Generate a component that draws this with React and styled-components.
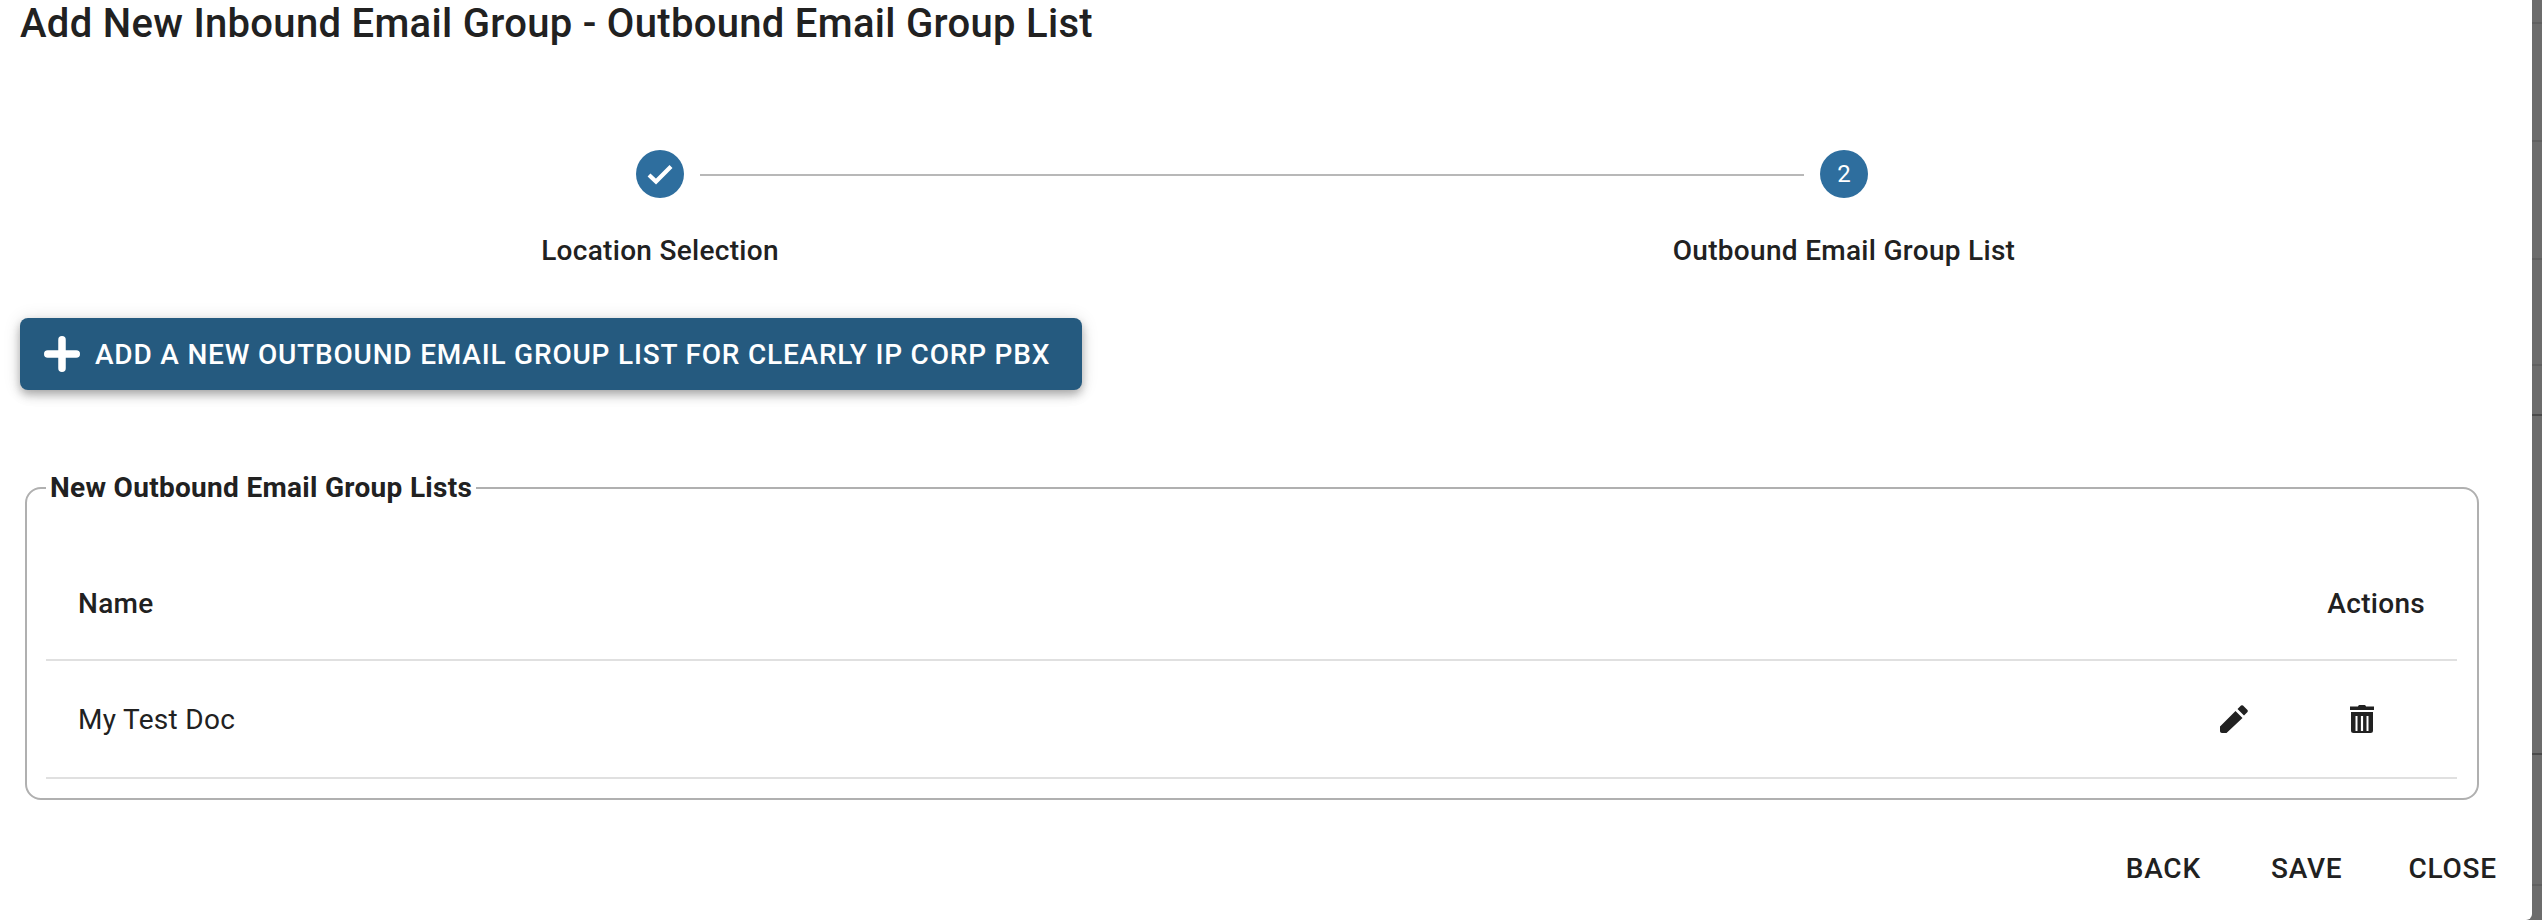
import React from "react";
import styled, { createGlobalStyle } from "styled-components";

const GlobalStyle = createGlobalStyle`
  html, body {
    margin: 0;
    padding: 0;
    background: #fff;
  }
  body {
    font-family: Roboto, "Liberation Sans", sans-serif;
    color: #212121;
  }
`;

const Page = styled.div`
  display: flex;
  width: 2542px;
  height: 920px;
  overflow: hidden;
  background: #6c6c6c;
`;

const Dialog = styled.main`
  box-sizing: border-box;
  flex: none;
  width: 2532px;
  height: 920px;
  background: #fff;
  border-bottom-right-radius: 6px;
  overflow: hidden;
  padding: 0 20px;
`;

// the rows of the page behind the dialog, only their borders show through
const BackdropStrip = styled.div`
  flex: 1;
  background-color: #6c6c6c;
  background-repeat: no-repeat;
  background-size: 100% 2px;
  background-image:
    linear-gradient(#606060, #606060), linear-gradient(#606060, #606060),
    linear-gradient(#606060, #606060), linear-gradient(#606060, #606060),
    linear-gradient(#4a4a4a, #4a4a4a), linear-gradient(#4a4a4a, #4a4a4a),
    linear-gradient(#606060, #606060);
  background-position: 0 22px, 0 140px, 0 258px, 0 364px, 0 414px, 0 753px, 0 884px;
`;

const Title = styled.h2`
  margin: 0;
  height: 48px;
  font-size: 40px;
  line-height: 48px;
  font-weight: 500;
  letter-spacing: 0.3px;
  white-space: nowrap;
`;

const IndicatorRow = styled.div`
  display: flex;
  align-items: center;
  width: 1232px;
  margin: 102px 0 0 616px;
`;

const Circle = styled.div`
  flex: none;
  width: 48px;
  height: 48px;
  border-radius: 50%;
  background: #2e6e9e;
  color: #fff;
  font-size: 24px;
  display: flex;
  align-items: center;
  justify-content: center;
`;

const Connector = styled.div`
  flex: 1;
  height: 2px;
  margin: 2px 16px 0;
  background: #b8b8b8;
`;

const LabelRow = styled.div`
  display: grid;
  grid-template-columns: 1fr 1fr;
  width: 2368px;
  margin: 27px 0 0 48px;
`;

const StepLabel = styled.div`
  text-align: center;
  font-size: 28px;
  line-height: 52px;
  font-weight: 500;
  letter-spacing: 0.3px;
`;

const AddButton = styled.button`
  display: flex;
  align-items: center;
  gap: 15px;
  box-sizing: border-box;
  width: 1062px;
  height: 72px;
  margin: 41px 0 0;
  padding: 0 22px 0 24px;
  border: 0;
  border-radius: 8px;
  background: #255a7f;
  color: #fff;
  font-family: inherit;
  font-size: 28px;
  font-weight: 500;
  letter-spacing: 0.8px;
  text-transform: uppercase;
  white-space: nowrap;
  box-shadow: 0 4px 8px -1px rgba(0, 0, 0, 0.2), 0 6px 12px 0 rgba(0, 0, 0, 0.14), 0 1px 18px 0 rgba(0, 0, 0, 0.12);
`;

const Group = styled.fieldset`
  box-sizing: border-box;
  width: 2454px;
  height: 328px;
  margin: 82px 0 0 5px;
  padding: 0 20px 0 19px;
  border: 2px solid #b0b0b0;
  border-radius: 16px;
`;

const GroupLegend = styled.legend`
  padding: 0 4px;
  font-size: 28px;
  line-height: 32px;
  font-weight: 700;
  letter-spacing: 0.3px;
`;

const Table = styled.table`
  width: 100%;
  border-collapse: collapse;
  margin-top: 43px;
`;

const HeadCell = styled.th`
  height: 112px;
  padding: 0 32px;
  border-bottom: 2px solid #e0e0e0;
  font-size: 28px;
  font-weight: 500;
  letter-spacing: 0.3px;
  text-align: ${(p) => p.$align || "left"};
`;

const BodyCell = styled.td`
  height: 116px;
  padding: 0 32px;
  border-bottom: 2px solid #e0e0e0;
  font-size: 28px;
  font-weight: 400;
  letter-spacing: 0.3px;
`;

const ActionsCell = styled(BodyCell)`
  width: 300px;
  padding: 0;
`;

const IconRow = styled.div`
  display: flex;
  justify-content: flex-end;
  gap: 92px;
  padding-right: 76px;
`;

const IconButton = styled.button`
  display: flex;
  padding: 0;
  border: 0;
  background: none;
  color: #212121;
`;

const Footer = styled.div`
  display: flex;
  justify-content: flex-end;
  gap: 66px;
  margin: 49px 15px 0 0;
`;

const TextButton = styled.button`
  padding: 0;
  border: 0;
  background: none;
  color: #212121;
  font-family: inherit;
  font-size: 28px;
  line-height: 40px;
  font-weight: 500;
  letter-spacing: 0.8px;
  text-transform: uppercase;

  &:first-child {
    margin-right: 4px;
  }
`;

const CheckIcon = () => (
  <svg width="48" height="48" viewBox="0 0 48 48" fill="none">
    <path d="M13 25l7 6.5L35 16.5" stroke="currentColor" strokeWidth="4.2" />
  </svg>
);

const PlusIcon = () => (
  <svg width="36" height="36" viewBox="0 0 36 36">
    <path d="M18 3.75v28.5M3.75 18h28.5" stroke="#fff" strokeWidth="7.5" strokeLinecap="round" />
  </svg>
);

const EditIcon = () => (
  <svg width="38" height="38" viewBox="3 3 38 38" fill="currentColor">
    <path d="M10 29.5 25.5 14l7 7-16 15H12c-1.2 0-2-.8-2-2zM27.5 12 31 8.6q1-.6 2 0l4.5 4.4q.7 1 0 2L34 18.5z" />
  </svg>
);

const TrashIcon = () => (
  <svg width="38" height="38" viewBox="3 3 38 38" fill="currentColor">
    <path d="M10 9.5h8c0-1 1-1.5 2-1.5h4c1 0 2 .5 2 1.5h8V13H10z" />
    <path
      d="M11 15h22v18.5a2.5 2.5 0 0 1-2.5 2.5h-17a2.5 2.5 0 0 1-2.5-2.5zM15.5 19v15h2V19zM20.9 19v15h2.2V19zM26.5 19v15h2V19z"
      fillRule="evenodd"
    />
  </svg>
);

const App = () => {
  return (
    <>
      <GlobalStyle />
      <Page>
        <Dialog>
          <Title>Add New Inbound Email Group - Outbound Email Group List</Title>
          <IndicatorRow>
            <Circle>
              <CheckIcon />
            </Circle>
            <Connector />
            <Circle>2</Circle>
          </IndicatorRow>
          <LabelRow>
            <StepLabel>Location Selection</StepLabel>
            <StepLabel>Outbound Email Group List</StepLabel>
          </LabelRow>
          <AddButton>
            <PlusIcon />
            Add a new Outbound Email Group List for Clearly IP Corp PBX
          </AddButton>
          <Group>
            <GroupLegend>New Outbound Email Group Lists</GroupLegend>
            <Table>
              <thead>
                <tr>
                  <HeadCell>Name</HeadCell>
                  <HeadCell $align="right">Actions</HeadCell>
                </tr>
              </thead>
              <tbody>
                <tr>
                  <BodyCell>My Test Doc</BodyCell>
                  <ActionsCell>
                    <IconRow>
                      <IconButton aria-label="edit">
                        <EditIcon />
                      </IconButton>
                      <IconButton aria-label="delete">
                        <TrashIcon />
                      </IconButton>
                    </IconRow>
                  </ActionsCell>
                </tr>
              </tbody>
            </Table>
          </Group>
          <Footer>
            <TextButton>Back</TextButton>
            <TextButton>Save</TextButton>
            <TextButton>Close</TextButton>
          </Footer>
        </Dialog>
        <BackdropStrip />
      </Page>
    </>
  );
};

export default App;
